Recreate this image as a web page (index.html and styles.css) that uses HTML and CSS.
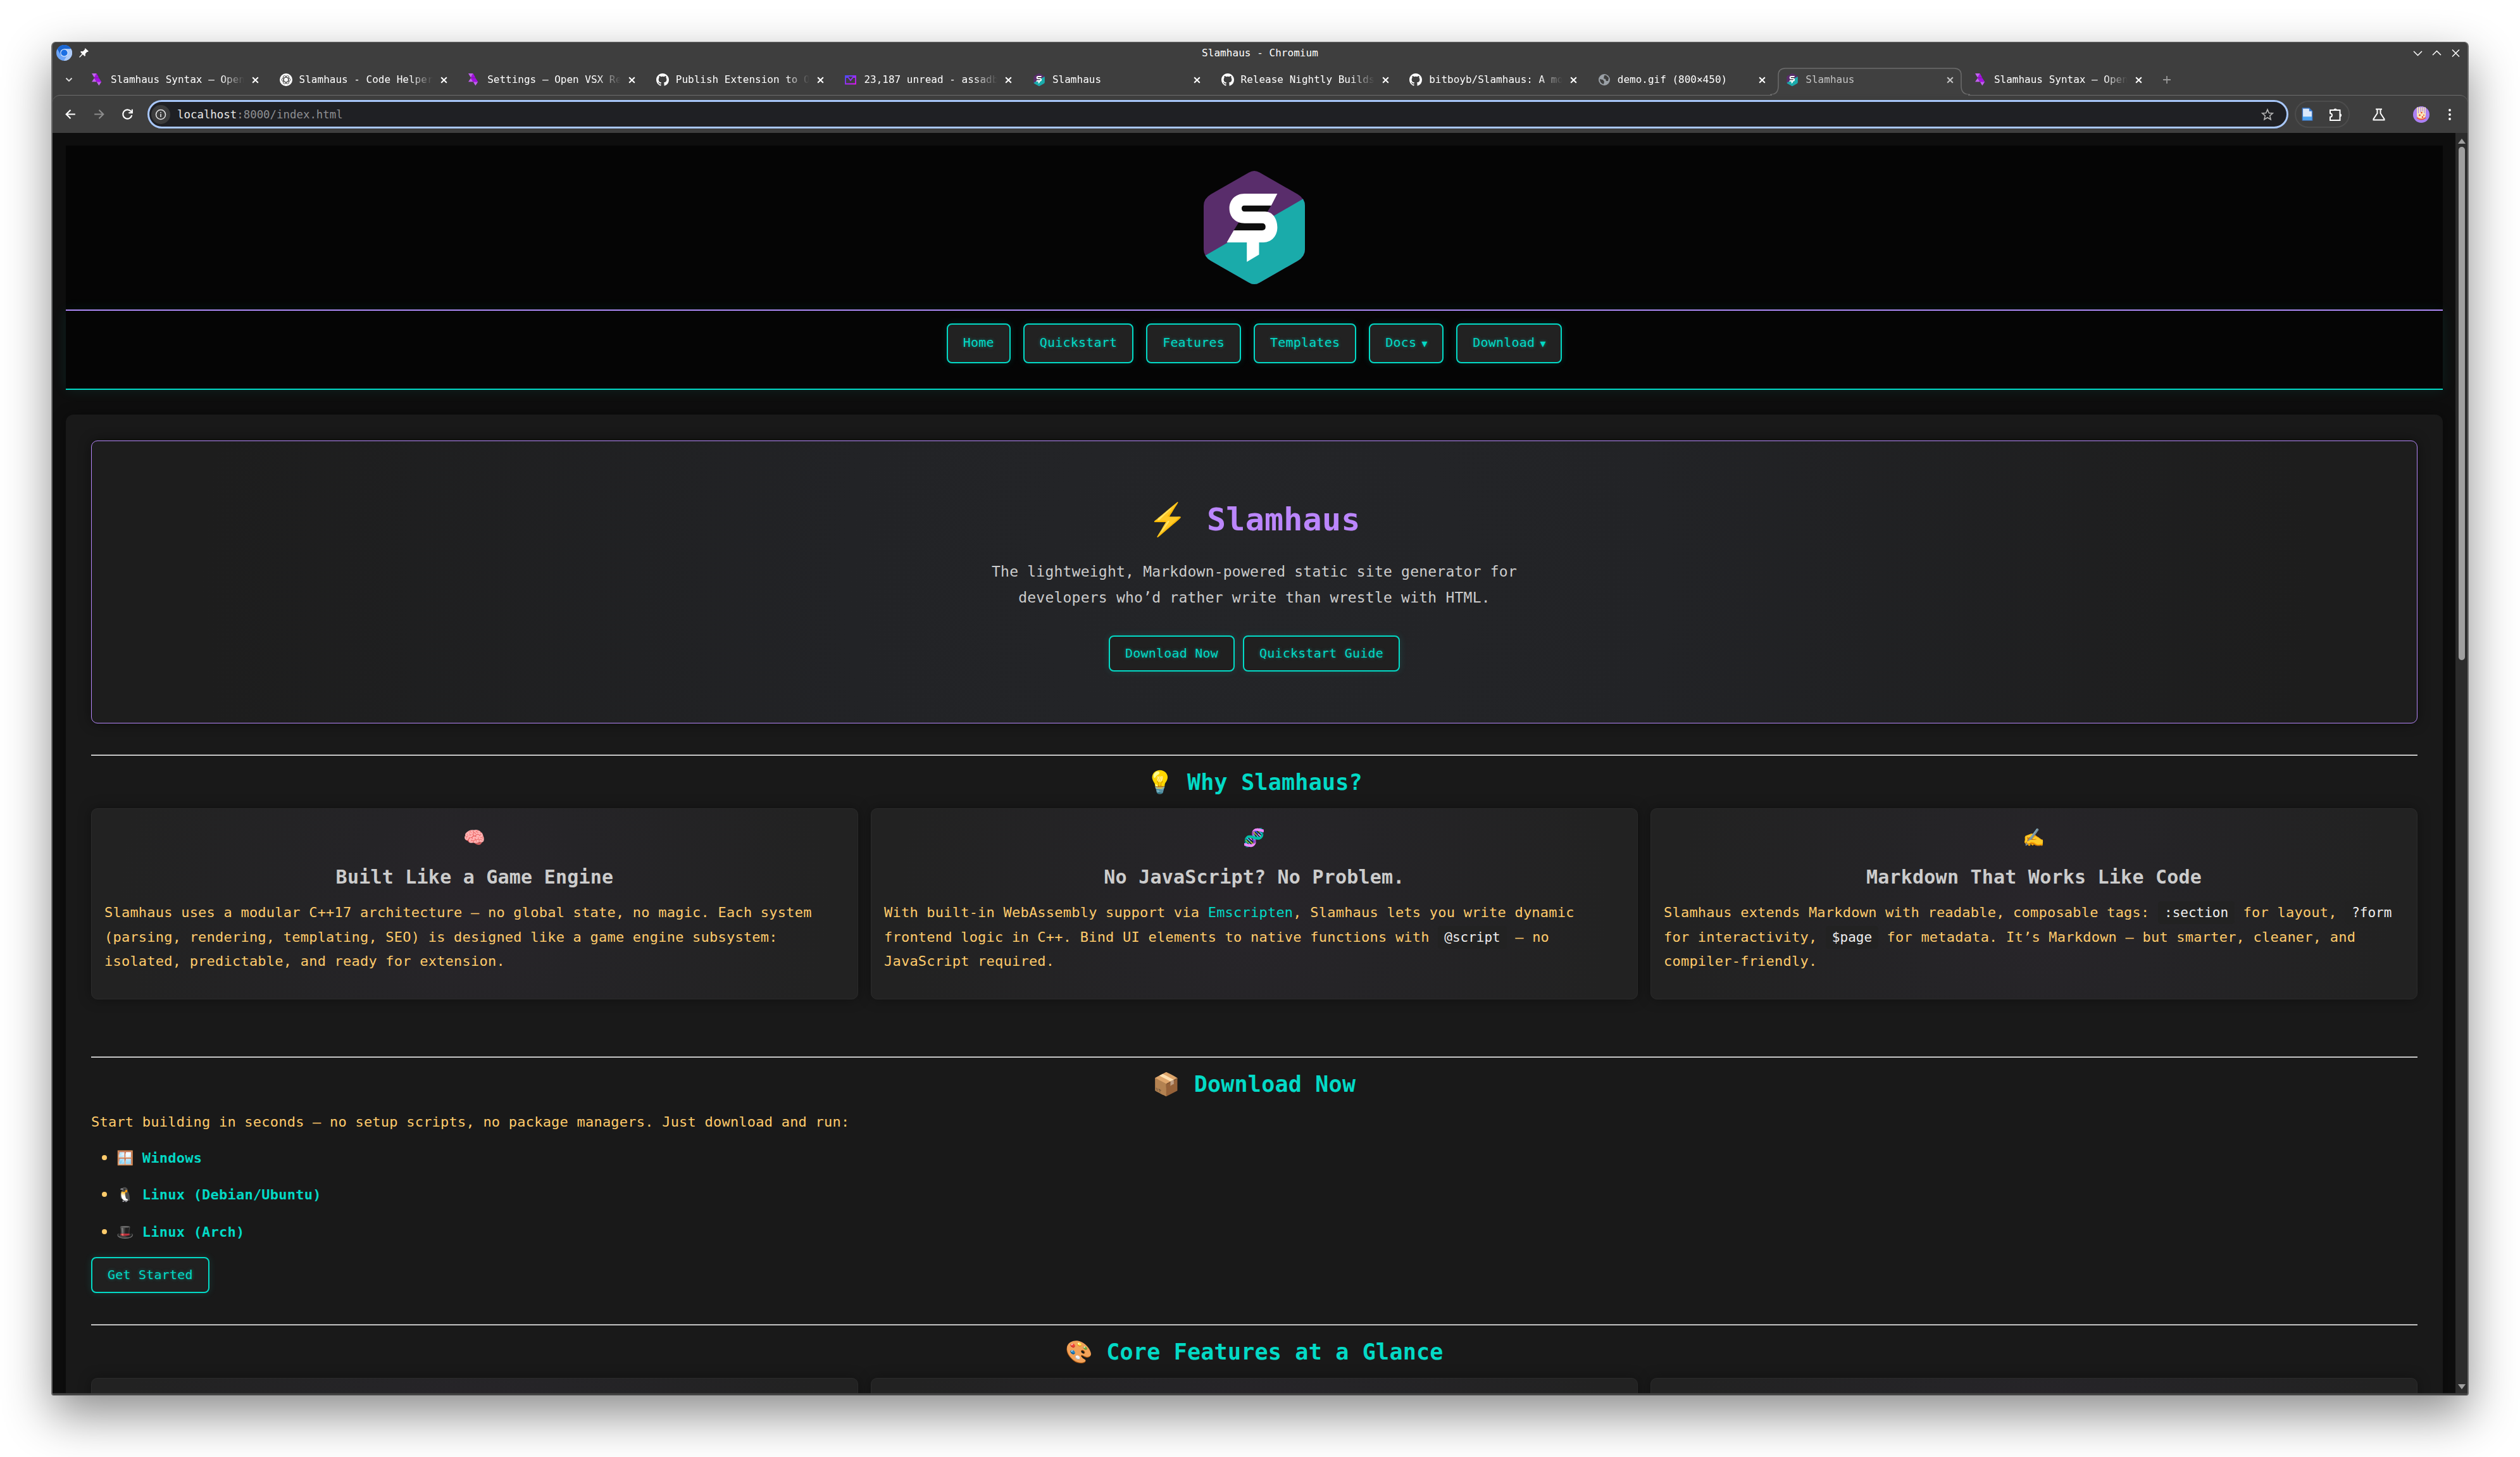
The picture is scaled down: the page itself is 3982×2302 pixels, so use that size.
FILE: index.html
```html
<!DOCTYPE html>
<html lang="en">
<head>
<meta charset="utf-8">
<title>Slamhaus</title>
<link rel="stylesheet" href="styles.css">
</head>
<body>
<svg class="defs" width="0" height="0">
  <symbol id="logo" viewBox="0 0 160 179">
    <clipPath id="hex"><path d="M71.6 2.5Q80-2.5 88.4 2.5L148.3 36.7Q160 43.5 160 55V124Q160 135.5 148.3 142.3L88.4 176.5Q80 181.5 71.6 176.5L11.7 142.3Q0 135.5 0 124V55Q0 43.5 11.7 36.7Z"/></clipPath>
    <g clip-path="url(#hex)">
      <rect width="160" height="179" fill="#592d6b"/>
      <path d="M160 42.5V179H0V135.3Z" fill="#1aabaa"/>
    </g>
    <path d="M60 54H107L100 66H60ZM55 82H98V95H47Z" fill="#0d0d0d"/>
    <path d="M116.4 36H64.7C49 36 40.6 47 40.6 59.3S49 82.7 64.7 82.7H92.3Q97.8 82.7 97.8 88.3T92.3 94H47.5L36.5 113H68.2V143.7L87.5 132.3V113H94.4C108 113 116.4 102 116.4 89.3C116.4 76 109 64.3 97 64.3H64.7Q60 64.3 60 59.3T64.7 54.7H106.8Z" fill="#fff"/>
  </symbol>
  <symbol id="vsx" viewBox="0 0 20 20"><path d="M1 0h7.700L5 6.700zM5 7.300l3.700 6H1zM8.700 13.300h7.600l-4 6z" fill="#c160ef"/><path d="M8.700 0l3.600 6.700H5zM5 7.300h7.300l-3.600 6zM12.300 7.300l4 6H8.700z" fill="#a60ee5"/></symbol>
  <symbol id="github" viewBox="0 0 16 16"><path fill="#fff" d="M8 0C3.580 0 0 3.580 0 8c0 3.540 2.290 6.530 5.470 7.590.4.070.55-.17.55-.38 0-.19-.01-.82-.01-1.490-2.010.37-2.530-.49-2.690-.94-.09-.23-.48-.94-.82-1.130-.28-.15-.68-.52-.01-.53.63-.01 1.080.58 1.230.82.72 1.210 1.870.87 2.330.66.07-.52.28-.87.51-1.070-1.780-.2-3.640-.89-3.640-3.950 0-.87.31-1.590.82-2.150-.08-.2-.36-1.020.08-2.120 0 0 .67-.21 2.200.82a7.600 7.600 0 0 1 4 0c1.530-1.040 2.200-.82 2.200-.82.44 1.100.16 1.920.08 2.120.51.56.82 1.270.82 2.150 0 3.070-1.870 3.750-3.650 3.950.29.25.54.73.54 1.480 0 1.070-.01 1.930-.01 2.200 0 .21.15.46.55.38A8 8 0 0 0 16 8c0-4.420-3.580-8-8-8z"/></symbol>
  <symbol id="gpt" viewBox="0 0 20 20"><circle cx="10" cy="10" r="10" fill="#fff"/><g fill="none" stroke="#444" stroke-width=".9"><ellipse cx="10" cy="10" rx="7" ry="3.600"/><ellipse cx="10" cy="10" rx="7" ry="3.600" transform="rotate(60 10 10)"/><ellipse cx="10" cy="10" rx="7" ry="3.600" transform="rotate(120 10 10)"/></g></symbol>
  <symbol id="mail" viewBox="0 0 20 20"><linearGradient id="mg" x2="1" y2="1"><stop stop-color="#4b4bff"/><stop offset="1" stop-color="#e414f5"/></linearGradient><path d="M2 4h16v12.500H2zM2 6l4 0 4 5 4-5h4" fill="none" stroke="url(#mg)" stroke-width="1.800"/></symbol>
  <symbol id="globe" viewBox="0 0 20 20"><circle cx="10" cy="10" r="9" fill="#9aa0a6"/><path d="M3 9l5 1 2 3-1 4c-4-1-6-4-6-8zM10 3l3 0 4 4-1 5-3 0-1-3-3-1z" fill="#3e3e3e"/></symbol>
  <symbol id="x" viewBox="0 0 12 12"><path d="M2 2l8 8M10 2l-8 8" stroke="currentColor" stroke-width="1.900" fill="none"/></symbol>
</svg>

<div class="window">
  <div class="titlebar">
    <div class="side">
      <svg width="25" height="25" viewBox="0 0 24 24"><circle cx="12" cy="12" r="12" fill="#6ea6f8"/><path d="M1.600 6A12 12 0 0 1 22.400 6H12L6.500 15z" fill="#1a66d2"/><path d="M22.400 6A12 12 0 0 1 11.500 24L17.500 14 12 6z" fill="#afccf9"/><circle cx="12" cy="12" r="6" fill="#d6e6ff"/><circle cx="12" cy="12" r="4.900" fill="#1b6fe4"/></svg>
      <svg width="15" height="15" viewBox="0 0 15 15"><path d="M9.500 0L15 5l-1.500 1-1 0L9.700 9l.3 2.800L9 13 5.800 10 1.500 14.500.3 14.700.5 13.500 4.700 9 2 6 3.200 5 6 5.300 8.800 2.500z" fill="#fff"/></svg>
    </div>
    <span>Slamhaus - Chromium</span>
    <div class="side right">
      <svg width="74" height="14" viewBox="0 0 74 14" fill="none" stroke="#fff" stroke-width="1.500"><path d="M1 4l6.500 6.500L14 4M31 10l6.500-6.500L44 10M62 1.500l11 11M73 1.500l-11 11"/></svg>
    </div>
  </div>

  <div class="tabs">
    <svg class="search" width="12" height="12" viewBox="0 0 12 12"><path d="M1.500 3.500L6 8l4.500-4.500" fill="none" stroke="#e0e0e0" stroke-width="1.800"/></svg>
    <div class="tab"><svg class="fav"><use href="#vsx"/></svg><span>Slamhaus Syntax – Open</span><svg class="close"><use href="#x"/></svg></div>
    <div class="tab"><svg class="fav"><use href="#gpt"/></svg><span>Slamhaus - Code Helper</span><svg class="close"><use href="#x"/></svg></div>
    <div class="tab"><svg class="fav"><use href="#vsx"/></svg><span>Settings – Open VSX Re</span><svg class="close"><use href="#x"/></svg></div>
    <div class="tab"><svg class="fav"><use href="#github"/></svg><span>Publish Extension to O</span><svg class="close"><use href="#x"/></svg></div>
    <div class="tab"><svg class="fav"><use href="#mail"/></svg><span>23,187 unread - assadb</span><svg class="close"><use href="#x"/></svg></div>
    <div class="tab"><svg class="fav"><use href="#logo"/></svg><span>Slamhaus</span><svg class="close"><use href="#x"/></svg></div>
    <div class="tab"><svg class="fav"><use href="#github"/></svg><span>Release Nightly Builds</span><svg class="close"><use href="#x"/></svg></div>
    <div class="tab"><svg class="fav"><use href="#github"/></svg><span>bitboyb/Slamhaus: A mo</span><svg class="close"><use href="#x"/></svg></div>
    <div class="tab"><svg class="fav"><use href="#globe"/></svg><span>demo.gif (800×450)</span><svg class="close"><use href="#x"/></svg></div>
    <div class="tab active"><svg class="shape" width="316" height="45" viewBox="0 0 316 45"><path d="M0 42.500Q13 42.500 13 29V12Q13 1 24 1H291Q302 1 302 12V29Q302 42.500 316 42.500" fill="#404040" stroke="#6c6c6c" stroke-width="1.500"/><path d="M3 43.500H313" stroke="#404040" stroke-width="2.500"/></svg><svg class="fav"><use href="#logo"/></svg><span>Slamhaus</span><svg class="close"><use href="#x"/></svg></div>
    <div class="tab"><svg class="fav"><use href="#vsx"/></svg><span>Slamhaus Syntax – Open</span><svg class="close"><use href="#x"/></svg></div>
    <svg class="plus" width="14" height="14" viewBox="0 0 14 14"><path d="M7 1v12M1 7h12" stroke="#989898" stroke-width="1.800"/></svg>
  </div>

  <div class="toolbar">
    <svg class="tool" viewBox="0 0 20 20"><path d="M17 10H4M10 3.500L3.500 10l6.500 6.500" stroke="#fff"/></svg>
    <svg class="tool" viewBox="0 0 20 20"><path d="M3 10h13M10 3.500l6.500 6.500-6.500 6.500" stroke="#8c8c8c"/></svg>
    <svg class="tool" viewBox="0 0 20 20"><path d="M16.500 11.500a6.800 6.800 0 1 1-1.700-6.200L17 7.500M17 2.500v5.300h-5.300" stroke="#fff"/></svg>
    <div class="url">
      <div class="info"><svg width="18" height="18" viewBox="0 0 18 18"><circle cx="9" cy="9" r="7.500" fill="none" stroke="#e3e3e3" stroke-width="1.600"/><path d="M9 8v5M9 5v1.700" stroke="#e3e3e3" stroke-width="1.600"/></svg></div>
      <span><b>localhost</b>:8000/index.html</span>
      <svg width="20" height="20" viewBox="0 0 20 20"><path d="M10 2l2.300 5.500 6 .5-4.600 3.900 1.400 5.900L10 14.700l-5.100 3.100 1.400-5.900L1.700 8l6-.5z" fill="none" stroke="#b5b5b5" stroke-width="1.600"/></svg>
    </div>
    <div class="ext">
      <svg width="18" height="21" viewBox="0 0 18 22"><path d="M1 1h11l5 5v15H1z" fill="#d9e8fb" stroke="#3d78c8" stroke-width="1.500"/><path d="M12 1v5h5z" fill="#2f75cf"/><path d="M1.500 15h15v5.500h-15z" fill="#4ba3f1"/></svg>
      <svg width="22" height="22" viewBox="0 0 22 22"><path d="M3 4H17.500V20H2V15Q5 14.500 5 12T2 9V4H4" fill="none" stroke="#fff" stroke-width="2"/><path d="M7.500 4a2.600 2.600 0 0 1 5.200 0zM17.500 9.500a2.600 2.600 0 0 1 0 5.200z" fill="#fff"/></svg>
    </div>
    <svg class="flask" width="20" height="20" viewBox="0 0 20 20"><path d="M5 1.500h10M7.500 2v6L1.500 17v1.500h17V17l-6-9V2" fill="none" stroke="#fff" stroke-width="2"/></svg>
    <svg class="avatar" width="26" height="26" viewBox="0 0 26 26"><circle cx="13" cy="13" r="13" fill="#ab80f3"/><path d="M6 1.500h14v12a7 7 0 0 1-14 0z" fill="#f8e6bb"/><path d="M8.500 1v10M12 0v9M15 0v8M18 1v10" stroke="#b28ae8" stroke-width="1.300"/><g fill="#e8402a"><circle cx="10.500" cy="14" r="1.300"/><circle cx="13.500" cy="10" r="1.200"/><circle cx="15" cy="17" r="1.300"/><circle cx="17" cy="14" r="1"/></g><path d="M6 18q7 5 14 0" fill="none" stroke="#f0563c" stroke-width="2"/></svg>
    <svg class="dots" width="4" height="20" viewBox="0 0 4 20" fill="#fff"><circle cx="2" cy="3" r="1.900"/><circle cx="2" cy="10" r="1.900"/><circle cx="2" cy="17" r="1.900"/></svg>
  </div>

  <div class="view">
    <div class="page">
      <header><svg width="160" height="179"><use href="#logo"/></svg></header>
      <nav>
        <a class="btn">Home</a><a class="btn">Quickstart</a><a class="btn">Features</a><a class="btn">Templates</a><a class="btn docs">Docs <i>▼</i></a><a class="btn dl">Download <i>▼</i></a>
      </nav>
      <main>
        <section class="hero">
          <h1><span class="em">⚡</span> Slamhaus</h1>
          <p>The lightweight, Markdown-powered static site generator for<br>developers who’d rather write than wrestle with HTML.</p>
          <div class="actions"><a class="btn">Download Now</a><a class="btn">Quickstart Guide</a></div>
        </section>

        <hr>
        <h2><span class="em">💡</span> Why Slamhaus?</h2>
        <div class="cards">
          <article>
            <div class="icon">🧠</div>
            <h3>Built Like a Game Engine</h3>
            <p>Slamhaus uses a modular C++17 architecture — no global state, no magic. Each system<br>(parsing, rendering, templating, SEO) is designed like a game engine subsystem:<br>isolated, predictable, and ready for extension.</p>
          </article>
          <article>
            <div class="icon">🧬</div>
            <h3>No JavaScript? No Problem.</h3>
            <p>With built-in WebAssembly support via <a>Emscripten</a>, Slamhaus lets you write dynamic<br>frontend logic in C++. Bind UI elements to native functions with <code>@script</code> — no<br>JavaScript required.</p>
          </article>
          <article>
            <div class="icon">✍️</div>
            <h3>Markdown That Works Like Code</h3>
            <p>Slamhaus extends Markdown with readable, composable tags: <code>:section</code> for layout, <code>?form</code><br>for interactivity, <code>$page</code> for metadata. It’s Markdown — but smarter, cleaner, and<br>compiler-friendly.</p>
          </article>
        </div>

        <hr class="far">
        <h2><span class="em">📦</span> Download Now</h2>
        <p>Start building in seconds — no setup scripts, no package managers. Just download and run:</p>
        <ul>
          <li><span class="em">🪟</span> <b>Windows</b></li>
          <li><span class="em">🐧</span> <b>Linux (Debian/Ubuntu)</b></li>
          <li><span class="em">🎩</span> <b>Linux (Arch)</b></li>
        </ul>
        <a class="btn start">Get Started</a>

        <hr>
        <h2><span class="em">🎨</span> Core Features at a Glance</h2>
        <div class="cards"><article></article><article></article><article></article></div>
      </main>
    </div>
    <div class="scroll">
      <svg width="12" height="8" viewBox="0 0 12 8"><path d="M0 8L6 0l6 8z" fill="#a0a0a0"/></svg>
      <div class="thumb"></div>
      <svg width="12" height="8" viewBox="0 0 12 8"><path d="M0 0l6 8 6-8z" fill="#a0a0a0"/></svg>
    </div>
  </div>
</div>
</body>
</html>
```
FILE: styles.css
```css
* { box-sizing: border-box; }

body {
  margin: 0;
  width: 3982px;
  height: 2302px;
  padding: 66px 0 0 81px;
  overflow: hidden;
  background: #fff;
  font-family: "DejaVu Sans Mono", "Noto Color Emoji", monospace;
}

.defs { position: absolute; }
svg { flex: none; display: block; }

.window {
  display: flex;
  flex-direction: column;
  width: 3820px;
  height: 2139px;
  border: 1px solid #6b6b6b;
  border-width: 1px 2px 1px 2px;
  border-radius: 7px 7px 4px 4px;
  background: #3e3e3e;
  box-shadow: 0 30px 75px rgba(0, 0, 0, .45);
  overflow: hidden;
  color: #fff;
  font-size: 16px;
}

/* browser chrome */
.titlebar {
  display: flex;
  align-items: center;
  justify-content: space-between;
  height: 33px;
  padding: 0 12px 0 6px;
}
.titlebar > span { padding-left: 6px; letter-spacing: .04px; }
.side { display: flex; align-items: center; gap: 11px; width: 80px; }
.side.right { justify-content: flex-end; }

.tabs {
  display: flex;
  align-items: center;
  height: 50px;
  padding: 2px 0 0 20px;
}
.search { margin-right: 29px; }
.tab {
  position: relative;
  display: flex;
  align-items: center;
  width: 297.6px;
}
.fav { width: 20px; height: 20px; margin-right: 11px; position: relative; }
.tab span {
  position: relative;
  width: 213px;
  margin-right: 9px;
  white-space: nowrap;
  line-height: 22px;
  -webkit-mask-image: linear-gradient(90deg, #000 174px, transparent 211px);
  mask-image: linear-gradient(90deg, #000 174px, transparent 211px);
}
.close { width: 13px; height: 13px; position: relative; }
.active { color: #c4c4c4; }
.shape { position: absolute; left: -25px; top: -8px; }
.plus { margin-left: -1px; }

.toolbar {
  display: flex;
  align-items: center;
  height: 60px;
  padding-left: 18px;
  border-top: 1.5px solid #6c6c6c;
  border-radius: 12px 12px 0 0;
}
.tool { width: 21px; height: 21px; margin-right: 24px; fill: none; stroke-width: 2; }
.url {
  display: flex;
  align-items: center;
  width: 3383px;
  height: 45px;
  margin-left: -3px;
  padding: 0 20px 0 3px;
  border: 3px solid #a8c7fa;
  border-radius: 23px;
  background: #1f2024;
  color: #8e8f92;
  font-size: 17.4px;
}
.url b { color: #e8e8e8; font-weight: normal; }
.url > svg { margin-left: auto; }
.info {
  display: flex;
  align-items: center;
  justify-content: center;
  width: 30px;
  height: 30px;
  margin-right: 11px;
  border-radius: 50%;
  background: #3c3c3c;
}
.ext {
  display: flex;
  align-items: center;
  justify-content: center;
  gap: 25px;
  width: 87px;
  height: 43px;
  margin-left: 10px;
  border: 2px solid #4c4c4c;
  border-radius: 22px;
}
.flask { margin-left: 36px; }
.avatar { margin-left: 44px; }
.dots { margin-left: 30px; }

.view { display: flex; height: 1991px; overflow: hidden; background: #0e0e0e; }
.page { width: 3797px; padding: 20px 20px 0 21px; }
.scroll {
  display: flex;
  flex-direction: column;
  align-items: center;
  flex: 1;
  padding: 9px 0 6px;
  background: #2c2c2c;
}
.thumb { width: 10px; height: 811px; margin: 5px 0 auto; border-radius: 5px; background: #9f9f9f; }

/* site */
header {
  display: flex;
  justify-content: center;
  height: 261px;
  padding-top: 40px;
  border-bottom: 2px solid #b587fa;
  background: #050505;
}
nav {
  display: flex;
  justify-content: center;
  gap: 20px;
  height: 125px;
  padding-top: 20px;
  border-bottom: 2px solid #03dac6;
  background: #050505;
  box-shadow: 0 0 20px rgba(3, 218, 198, .1);
}
.btn {
  display: flex;
  align-items: center;
  height: 57px;
  padding: 0 24px 1px;
  border: 2px solid #03dac6;
  border-radius: 8px;
  background: #202020;
  box-shadow: 0 0 12px rgba(3, 218, 198, .16);
  color: #03dac6;
  font-size: 20px;
  letter-spacing: .01em;
  text-shadow: 0 0 5px rgba(3, 218, 198, .5);
  white-space: pre;
}
nav .btn { height: 63px; padding-bottom: 3px; background: #222; }
.btn i { margin: 3px 0 0 -4px; font-style: normal; font-size: 15px; }
.docs { width: 118px; }
.dl { width: 167px; }

main {
  height: 2000px;
  margin-top: 39px;
  padding: 41px 40px 0;
  border-radius: 12px;
  background: #191919;
  box-shadow: 0 0 20px rgba(0, 0, 0, .4);
  color: #ffcb6b;
  font-size: 22px;
  line-height: 38.5px;
  letter-spacing: .01em;
}
p, h1, h2, h3, ul { margin: 0; white-space: nowrap; }

.hero {
  height: 447px;
  padding-top: 94px;
  border: 1px solid #b587fa;
  border-radius: 10px;
  background: radial-gradient(circle, #242528 0%, #222326 35%, #1d1d1d 90%);
  box-shadow: 0 0 20px rgba(0, 0, 0, .45);
  text-align: center;
}
.hero h1 { color: #bb86fc; font-size: 50px; line-height: 60px; }
.hero p { margin-top: 32px; color: #ccc; font-size: 23px; line-height: 41px; }
.actions { display: flex; justify-content: center; gap: 13px; margin-top: 39px; }

.em {
  display: inline-block;
  width: 1.245em;
  font-family: "Noto Color Emoji", sans-serif;
  letter-spacing: 0;
  line-height: 1;
}

hr {
  height: 2px;
  margin: 49px 0 12px;
  border: 0;
  background: linear-gradient(#999 50%, #eee 50%);
}
hr.far { margin-top: 90px; }
h2 {
  height: 60px;
  margin-bottom: 11px;
  color: #03dac6;
  font-size: 35px;
  line-height: 60px;
  text-align: center;
}

.cards { display: grid; grid-template-columns: repeat(3, 1212px); gap: 20px; }
article {
  height: 302px;
  padding: 21px 20px;
  border: 1px solid #2b2b2b;
  border-radius: 10px;
  background: radial-gradient(circle, #28252a 0%, #252427 30%, #222 90%);
  box-shadow: 0 0 20px rgba(0, 0, 0, .35);
}
.icon { height: 50px; font-size: 28px; line-height: 50px; text-align: center; }
h3 { margin: 12px 0 12px; color: #ccc; font-size: 30px; line-height: 50px; text-align: center; }
article a { color: #03dac6; }
code {
  padding: 6px 10px;
  border-radius: 5px;
  background: #222;
  color: #eee;
  font: 21px "DejaVu Sans Mono", monospace;
  letter-spacing: 0;
}

ul { margin: 18px 0 20px; padding: 0; list-style: none; }
li { height: 38.5px; margin-bottom: 20px; }
li::before {
  content: "";
  display: inline-block;
  width: 8px;
  height: 8px;
  margin: 0 15px 4px 17px;
  border-radius: 50%;
  background: #ffcb6b;
}
li b { color: #03dac6; }
.start { width: 187px; }
```
